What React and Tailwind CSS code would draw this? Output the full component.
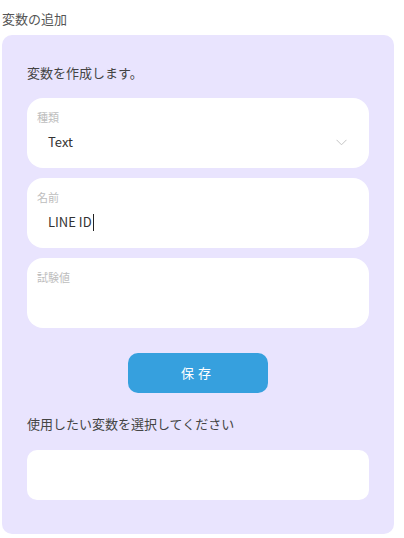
const jp = { fontFamily: '"Noto Sans CJK JP", "Noto Sans", sans-serif' }

function Field({ label, children }) {
  return (
    <div className="h-[70px] rounded-2xl bg-white px-[10px] pt-[12px]">
      <div className="text-[11px] leading-[14px] text-[#bdbdbd]">{label}</div>
      {children}
    </div>
  )
}

export default function App() {
  return (
    <div className="w-[404px] h-[538px] bg-white" style={jp}>
      <div className="pl-[2px] pt-[9px] text-[13px] leading-[20px] text-[#555]">変数の追加</div>
      <div className="ml-[2px] mt-[6px] w-[392px] h-[499px] rounded-[10px] bg-[#e9e4fe] px-[25px] pt-[28px]">
        <div className="text-[13px] leading-[20px] text-[#444]">変数を作成します。</div>
        <div className="mt-[15px] flex flex-col gap-[10px]">
          <Field label="種類">
            <div className="mt-[8px] flex items-center justify-between pl-[11px] pr-[12px]">
              <span className="text-[13px] leading-[20px] text-[#333]">Text</span>
              <svg width="11" height="7" viewBox="0 0 11 7" fill="none">
                <path d="M0.5 0.8 L5.5 5.8 L10.5 0.8" stroke="#c4c4c4" strokeWidth="1" />
              </svg>
            </div>
          </Field>
          <Field label="名前">
            <div className="mt-[8px] pl-[11px] flex items-center">
              <span className="text-[13px] leading-[20px] text-[#333]">LINE ID</span>
              <span className="ml-[1px] h-[17px] w-px bg-[#222]" />
            </div>
          </Field>
          <Field label="試験値" />
        </div>
        <div className="mt-[25px] flex justify-center">
          <button className="h-[40px] w-[140px] rounded-[10px] bg-[#36a0de] text-[13px] tracking-[0.3em] text-white">
            保存
          </button>
        </div>
        <div className="mt-[21px] text-[13px] leading-[20px] text-[#444]">使用したい変数を選択してください</div>
        <div className="mt-[16px] h-[50px] rounded-[10px] bg-white" />
      </div>
    </div>
  )
}
